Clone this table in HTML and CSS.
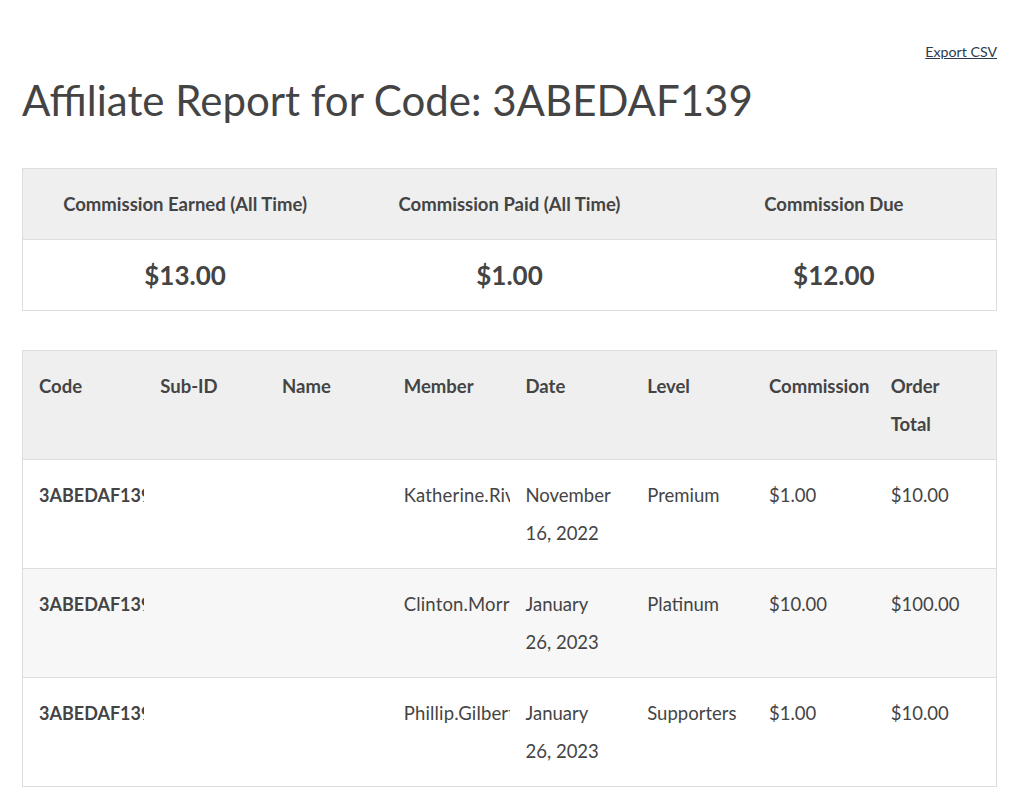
FILE: index.html
```html
<!DOCTYPE html>
<html>
<head>
<meta charset="utf-8">
<link rel="stylesheet" href="styles.css">
</head>
<body>
<div class="page">
  <div class="toolbar"><a class="export" href="#">Export CSV</a></div>
  <h1 class="title">Affiliate Report for Code: 3ABEDAF139</h1>

  <table class="summary">
    <thead>
      <tr>
        <th>Commission Earned (All Time)</th>
        <th>Commission Paid (All Time)</th>
        <th>Commission Due</th>
      </tr>
    </thead>
    <tbody>
      <tr>
        <td>$13.00</td>
        <td>$1.00</td>
        <td>$12.00</td>
      </tr>
    </tbody>
  </table>

  <table class="report">
    <thead>
      <tr>
        <th>Code</th>
        <th>Sub-ID</th>
        <th>Name</th>
        <th>Member</th>
        <th>Date</th>
        <th>Level</th>
        <th>Commission</th>
        <th>Order Total</th>
      </tr>
    </thead>
    <tbody>
      <tr>
        <td class="code">3ABEDAF139</td>
        <td></td>
        <td></td>
        <td class="member">Katherine.Rivera</td>
        <td>November 16, 2022</td>
        <td>Premium</td>
        <td>$1.00</td>
        <td>$10.00</td>
      </tr>
      <tr class="alt">
        <td class="code">3ABEDAF139</td>
        <td></td>
        <td></td>
        <td class="member">Clinton.Morrison</td>
        <td>January 26, 2023</td>
        <td>Platinum</td>
        <td>$10.00</td>
        <td>$100.00</td>
      </tr>
      <tr>
        <td class="code">3ABEDAF139</td>
        <td></td>
        <td></td>
        <td class="member">Phillip.Gilbert</td>
        <td>January 26, 2023</td>
        <td>Supporters</td>
        <td>$1.00</td>
        <td>$10.00</td>
      </tr>
    </tbody>
  </table>
</div>
</body>
</html>
```

FILE: styles.css
```css
html, body {
  margin: 0;
  padding: 0;
  background: #ffffff;
}

body {
  font-family: Lato, "Open Sans", sans-serif;
  color: #444444;
  font-size: 18.5px;
}

.page {
  width: 975px;
  margin: 0 0 0 22px;
  padding-top: 41px;
}

.toolbar {
  display: flex;
  justify-content: flex-end;
}

.export {
  font-size: 14.2px;
  color: #2b3a4e;
  text-decoration: underline;
  line-height: 22px;
}

.title {
  font-size: 42px;
  font-weight: 400;
  color: #444444;
  margin: 11px 0 42px 0;
  line-height: 52px;
}

table {
  width: 975px;
  border-collapse: collapse;
  table-layout: fixed;
  border: 1px solid #dddddd;
}

.summary th,
.summary td {
  text-align: center;
  padding: 16px;
  line-height: 38px;
  border-bottom: 1px solid #dddddd;
}

.summary th {
  background: #efefef;
  font-weight: 700;
  font-size: 18.5px;
}

.summary td {
  font-weight: 700;
  font-size: 26px;
}

.report {
  margin-top: 39px;
}

.report th,
.report td {
  text-align: left;
  vertical-align: top;
  padding: 16px;
  line-height: 38px;
  border-bottom: 1px solid #dddddd;
  overflow: hidden;
}

.report th {
  background: #efefef;
  font-weight: 700;
}

.report td {
  font-weight: 400;
}

.report td.code {
  font-weight: 700;
  font-size: 18px;
  white-space: nowrap;
  padding-right: 0;
}

.report td.member {
  white-space: nowrap;
  padding-right: 0;
  letter-spacing: 0.15px;
}

.report tr.alt td {
  background: #f7f7f7;
}
```
